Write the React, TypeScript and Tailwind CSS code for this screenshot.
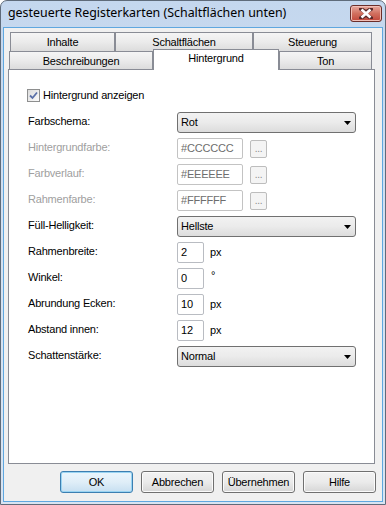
import React from "react";

const font = { fontFamily: '"Liberation Sans", Arial, sans-serif' };

function Select({ value }: { value: string }) {
  return (
    <div className="relative w-[179px] h-[21px] rounded-[3px] border border-[#707070] bg-gradient-to-b from-[#f2f2f2] via-[#ebebeb] to-[#dcdcdc] flex items-center pl-[3px] text-black">
      <span className="leading-none">{value}</span>
      <svg className="absolute right-[4px] top-[8px]" width="7" height="4" viewBox="0 0 7 4">
        <path d="M0 0H7L3.5 4Z" fill="#000" />
      </svg>
    </div>
  );
}

function TextInput({ value, w, disabled }: { value: string; w: string; disabled?: boolean }) {
  return (
    <div
      className={`${w} h-[21px] rounded-[2px] border bg-white flex items-center pl-[3px] ${
        disabled ? "border-[#c3c3c3] text-[#6d6d6d]" : "border-[#b9bcc2] text-black"
      }`}
    >
      <span className="leading-none">{value}</span>
    </div>
  );
}

function DotsButton() {
  return (
    <div className="mt-[2px] ml-[7px] w-[17px] h-[18px] rounded-[2px] border border-[#bdbdbd] bg-[#f4f4f4] flex items-end justify-center pb-[3px] text-[#8a8a8a] leading-none text-[10px]">
      ...
    </div>
  );
}

function Row({ label, disabled, children }: { label: string; disabled?: boolean; children: React.ReactNode }) {
  return (
    <div className="flex h-[26px] items-start">
      <div className={`w-[149px] pt-[3px] leading-[13px] ${disabled ? "text-[#a0a0a0]" : "text-black"}`}>{label}</div>
      <div className="flex items-start">{children}</div>
    </div>
  );
}

function Tab({ label, w, selected }: { label: string; w: string; selected?: boolean }) {
  if (selected) {
    return (
      <div
        className={`${w} h-[21px] -mb-[1px] relative z-10 border-t border-l border-r border-[#898c95] bg-white flex justify-center pt-[2px] leading-[13px] text-black`}
      >
        {label}
      </div>
    );
  }
  return (
    <div
      className={`${w} h-full border-t border-l border-r border-[#898c95] bg-gradient-to-b from-[#f5f5f5] via-[#ebebeb] to-[#dcdcdc] flex justify-center pt-[3px] leading-[13px] text-black`}
    >
      {label}
    </div>
  );
}

function Btn({ label, def }: { label: string; def?: boolean }) {
  return (
    <div
      className={`w-[73px] h-[22px] rounded-[3px] border flex items-center justify-center text-black ${
        def
          ? "border-[#3c7fb1] bg-gradient-to-b from-[#eaf6fd] via-[#e0eef8] to-[#c7dff1] shadow-[inset_0_0_0_1px_#9ad4f2]"
          : "border-[#707070] bg-gradient-to-b from-[#f2f2f2] via-[#ebebeb] to-[#d6d6d6] shadow-[inset_0_0_0_1px_#fbfbfb]"
      }`}
    >
      {label}
    </div>
  );
}

export default function App() {
  return (
    <div className="w-[386px] h-[505px] text-[11px] tracking-[-0.2px]" style={font}>
      <div className="w-[386px] h-[505px] flex flex-col border border-[#5f6b7a] rounded-t-[7px] bg-gradient-to-b from-[#c4d7ee] via-[#d3e1f1] to-[#d8e4f2] overflow-hidden">
        {/* title bar */}
        <div className="h-[26px] flex items-center pl-[7px] pr-[3px] relative">
          <span
            className="text-[12.4px] tracking-normal text-black leading-none -mt-[1px]"
            style={{ fontFamily: '"Noto Sans", "Open Sans", sans-serif' }}
          >
            gesteuerte Registerkarten (Schaltflächen unten)
          </span>
          <div className="absolute right-[3px] top-[4px] w-[32px] h-[17px] rounded-[3px] border border-[#6b2e2b] bg-gradient-to-b from-[#e7a89f] via-[#d1705f] to-[#c2463a] shadow-[inset_0_0_0_1px_#f0c0b8] flex items-center justify-center">
            <svg width="14" height="11" viewBox="0 0 14 11">
              <path
                d="M2 1L7 4.2L12 1M2 10L7 6.8L12 10"
                stroke="#5a2a2a"
                strokeWidth="4"
                fill="none"
                strokeLinecap="square"
              />
              <path d="M2.5 1.5L11.5 9.5M11.5 1.5L2.5 9.5" stroke="#fff" strokeWidth="2.6" fill="none" />
            </svg>
          </div>
        </div>
        {/* client area */}
        <div className="flex-1 mx-[2px] mb-[2px] border border-[#5fa7df] bg-[#f0f0f0] flex flex-col px-[4px] pt-[4px]">
          {/* tabs */}
          <div className="flex h-[19px] pl-[2px]">
            <Tab label="Inhalte" w="w-[105px]" />
            <Tab label="Schaltflächen" w="w-[138px]" />
            <Tab label="Steuerung" w="w-[119px]" />
          </div>
          <div className="flex h-[18px] items-end pl-[1px]">
            <Tab label="Beschreibungen" w="w-[144px]" />
            <Tab label="Hintergrund" w="w-[126px]" selected />
            <Tab label="Ton" w="w-[93px]" />
          </div>
          {/* panel */}
          <div className="w-[367px] h-[395px] border border-[#898c95] bg-white pl-[19px] pt-[19px]">
            <div className="flex items-center h-[13px] -ml-[1px] mb-[10px]">
              <div className="w-[13px] h-[13px] border border-[#8e8f8f] bg-gradient-to-br from-[#dcdcdc] to-[#fbfbfb] flex items-center justify-center">
                <svg width="11" height="11" viewBox="0 0 11 11">
                  <path d="M2 5.5L4.5 8L9 2.5" stroke="#5a70a8" strokeWidth="1.8" fill="none" />
                </svg>
              </div>
              <span className="ml-[3px] text-black leading-[13px]">Hintergrund anzeigen</span>
            </div>
            <div className="flex flex-col">
              <Row label="Farbschema:">
                <Select value="Rot" />
              </Row>
              <Row label="Hintergrundfarbe:" disabled>
                <TextInput value="#CCCCCC" w="w-[66px]" disabled />
                <DotsButton />
              </Row>
              <Row label="Farbverlauf:" disabled>
                <TextInput value="#EEEEEE" w="w-[66px]" disabled />
                <DotsButton />
              </Row>
              <Row label="Rahmenfarbe:" disabled>
                <TextInput value="#FFFFFF" w="w-[66px]" disabled />
                <DotsButton />
              </Row>
              <Row label="Füll-Helligkeit:">
                <Select value="Hellste" />
              </Row>
              <Row label="Rahmenbreite:">
                <TextInput value="2" w="w-[27px]" />
                <span className="ml-[6px] pt-[4px] leading-[13px]">px</span>
              </Row>
              <Row label="Winkel:">
                <TextInput value="0" w="w-[27px]" />
                <span className="ml-[7px] pt-[1px] leading-[13px]">°</span>
              </Row>
              <Row label="Abrundung Ecken:">
                <TextInput value="10" w="w-[27px]" />
                <span className="ml-[6px] pt-[4px] leading-[13px]">px</span>
              </Row>
              <Row label="Abstand innen:">
                <TextInput value="12" w="w-[27px]" />
                <span className="ml-[6px] pt-[4px] leading-[13px]">px</span>
              </Row>
              <Row label="Schattenstärke:">
                <Select value="Normal" />
              </Row>
            </div>
          </div>
          {/* buttons */}
          <div className="flex justify-end gap-[8px] mt-[7px] pr-[2px]">
            <Btn label="OK" def />
            <Btn label="Abbrechen" />
            <Btn label="Übernehmen" />
            <Btn label="Hilfe" />
          </div>
        </div>
      </div>
    </div>
  );
}
